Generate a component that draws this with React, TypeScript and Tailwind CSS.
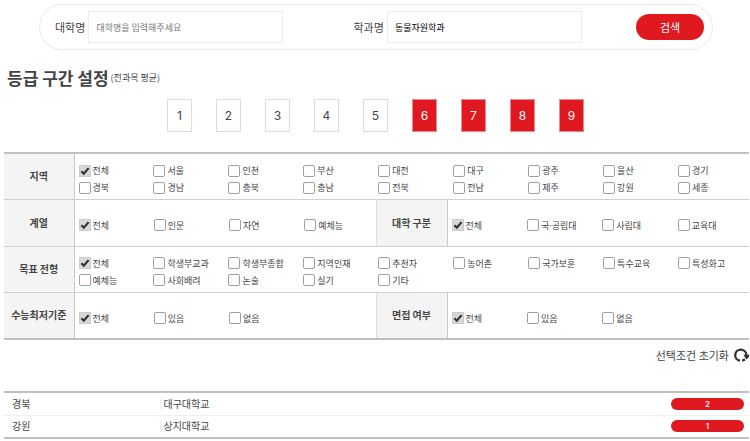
import React, { useState } from "react";

const GRADES = [1, 2, 3, 4, 5, 6, 7, 8, 9];

const REGIONS = ["전체", "서울", "인천", "부산", "대전", "대구", "광주", "울산", "경기", "경북", "경남", "충북", "충남", "전북", "전남", "제주", "강원", "세종"];
const FIELDS = ["전체", "인문", "자연", "예체능"];
const UNIV_TYPES = ["전체", "국·공립대", "사립대", "교육대"];
const ADMISSIONS = ["전체", "학생부교과", "학생부종합", "지역인재", "추천자", "농어촌", "국가보훈", "특수교육", "특성화고", "예체능", "사회배려", "논술", "실기", "기타"];
const YES_NO = ["전체", "있음", "없음"];

const RESULTS = [
  { region: "경북", name: "대구대학교", count: 2 },
  { region: "강원", name: "상지대학교", count: 1 },
];

interface OptionsProps {
  items: string[];
  value: string[];
  onChange: (next: string[]) => void;
  wide?: boolean;
}

function Options({ items, value, onChange, wide }: OptionsProps) {
  const toggle = (item: string) => {
    onChange(value.includes(item) ? value.filter((v) => v !== item) : [...value, item]);
  };

  return (
    <div className={`grid ${wide ? "grid-cols-9 pt-2" : "grid-cols-4 pt-[17px]"}`}>
      {items.map((item) => (
        <label
          key={item}
          className="flex items-center h-[17px] pl-1 gap-0.5 text-[9px] leading-none whitespace-nowrap font-['Inter','Noto_Sans_CJK_KR',sans-serif]"
        >
          <span className="relative block size-3 shrink-0">
            <input
              type="checkbox"
              checked={value.includes(item)}
              onChange={() => toggle(item)}
              className="peer block appearance-none size-3 rounded-xs border border-[#a0a0a0] bg-white checked:rounded-none checked:border-[#cccccc] checked:bg-[#d8d8d8]"
            />
            <svg
              viewBox="0 0 13 13"
              className="absolute inset-0 size-3 hidden peer-checked:block pointer-events-none"
              fill="none"
              stroke="#333"
              strokeWidth="2.4"
            >
              <path d="M2.6 6.8 L5.2 9.4 L10.4 3.4" />
            </svg>
          </span>
          {item}
        </label>
      ))}
    </div>
  );
}

function HeadCell({ children, inner }: { children: React.ReactNode; inner?: boolean }) {
  return (
    <th
      scope="row"
      className={`bg-[#f4f4f4] border-r border-r-[#c8c8c8] text-[10px] leading-4 font-bold text-center align-middle whitespace-nowrap ${inner ? "border-l border-l-[#dddddd]" : ""}`}
    >
      {children}
    </th>
  );
}

export default function App() {
  const [university, setUniversity] = useState("");
  const [department, setDepartment] = useState("동물자원학과");
  const [grades, setGrades] = useState([6, 7, 8, 9]);
  const [regions, setRegions] = useState(["전체"]);
  const [fields, setFields] = useState(["전체"]);
  const [univTypes, setUnivTypes] = useState(["전체"]);
  const [admissions, setAdmissions] = useState(["전체"]);
  const [minimum, setMinimum] = useState(["전체"]);
  const [interview, setInterview] = useState(["전체"]);

  const toggleGrade = (g: number) => {
    setGrades(grades.includes(g) ? grades.filter((v) => v !== g) : [...grades, g]);
  };

  const reset = () => {
    setRegions(["전체"]);
    setFields(["전체"]);
    setUnivTypes(["전체"]);
    setAdmissions(["전체"]);
    setMinimum(["전체"]);
    setInterview(["전체"]);
  };

  return (
    <div className="bg-white text-[#444444] pt-1 pl-1 pr-px font-['Noto_Sans_CJK_KR',sans-serif]">
      {/* Search bar */}
      <form
        onSubmit={(e) => e.preventDefault()}
        className="flex items-center justify-between h-[46px] ml-[35px] mr-9 pl-[15px] pr-2 rounded-full border border-[#e8e8e8]"
      >
        <div className="flex items-center gap-[3px]">
          <label htmlFor="university" className="text-[11px]">대학명</label>
          <input
            id="university"
            value={university}
            onChange={(e) => setUniversity(e.target.value)}
            placeholder="대학명을 입력해주세요"
            className="w-[195px] h-8 px-[7px] border border-[#ececec] text-[9px] text-[#333333] placeholder:text-[#777777] outline-none"
          />
        </div>
        <div className="flex items-center gap-[3px] ml-4">
          <label htmlFor="department" className="text-[11px]">학과명</label>
          <input
            id="department"
            value={department}
            onChange={(e) => setDepartment(e.target.value)}
            className="w-[195px] h-8 px-[7px] border border-[#ececec] text-[9px] text-black outline-none"
          />
        </div>
        <button type="submit" className="w-[68px] h-[26px] rounded-full bg-[#e0181f] text-white text-[11px]">
          검색
        </button>
      </form>

      {/* Grade range */}
      <h2 className="flex items-center gap-0.5 mt-4 pl-[3px] h-6 whitespace-nowrap">
        <span className="text-[17px] font-bold">등급 구간 설정</span>
        <span className="text-[9px] font-normal">(전과목 평균)</span>
      </h2>
      <div className="flex justify-center gap-6 mt-[9px] pr-0.5">
        {GRADES.map((g) => (
          <button
            key={g}
            onClick={() => toggleGrade(g)}
            className={`w-[25px] h-[33px] border text-[12px] font-['Inter',sans-serif] ${
              grades.includes(g) ? "bg-[#e0181f] border-[#e88a8d] text-white" : "bg-white border-[#dddddd]"
            }`}
          >
            {g}
          </button>
        ))}
      </div>

      {/* Filters */}
      <table className="w-full table-fixed border-collapse mt-5 border-y-2 border-y-[#c0c0c0]">
        <colgroup>
          <col className="w-[70px]" />
          <col />
          <col className="w-[71px]" />
          <col />
        </colgroup>
        <tbody className="divide-y divide-[#d0d0d0]">
          <tr className="h-[46px]">
            <HeadCell>지역</HeadCell>
            <td colSpan={3} className="align-top">
              <Options items={REGIONS} value={regions} onChange={setRegions} wide />
            </td>
          </tr>
          <tr className="h-[47px]">
            <HeadCell>계열</HeadCell>
            <td className="align-top">
              <Options items={FIELDS} value={fields} onChange={setFields} />
            </td>
            <HeadCell inner>대학 구분</HeadCell>
            <td className="align-top">
              <Options items={UNIV_TYPES} value={univTypes} onChange={setUnivTypes} />
            </td>
          </tr>
          <tr className="h-[46px]">
            <HeadCell>목표 전형</HeadCell>
            <td colSpan={3} className="align-top">
              <Options items={ADMISSIONS} value={admissions} onChange={setAdmissions} wide />
            </td>
          </tr>
          <tr className="h-[47px]">
            <HeadCell>수능최저기준</HeadCell>
            <td className="align-top">
              <Options items={YES_NO} value={minimum} onChange={setMinimum} />
            </td>
            <HeadCell inner>면접 여부</HeadCell>
            <td className="align-top">
              <Options items={YES_NO} value={interview} onChange={setInterview} />
            </td>
          </tr>
        </tbody>
      </table>

      <div className="flex justify-end mt-[7px]">
        <button onClick={reset} className="flex items-center gap-1 h-4 text-[11px] whitespace-nowrap">
          선택조건 초기화
          <svg viewBox="0 0 16 16" className="w-4 h-4" fill="none" stroke="#333" strokeWidth="2.3">
            <path d="M7 13.7 A5.6 5.6 0 1 1 13.4 8.4" />
            <path d="M9.2 13.8 L12 12.4" />
            <path d="M10.4 7.8 H16 V10 L13.4 12.6 Z" fill="#333" stroke="none" />
          </svg>
        </button>
      </div>

      {/* Results */}
      <table className="w-full table-fixed border-collapse mt-7 border-y-2 border-y-[#c0c0c0] text-[10px] leading-4">
        <colgroup>
          <col className="w-[21%]" />
          <col />
          <col className="w-[78px]" />
        </colgroup>
        <tbody className="divide-y divide-[#f0f0f0]">
          {RESULTS.map((r) => (
            <tr key={r.name} className="h-[23px]">
              <td className="pl-2">{r.region}</td>
              <td>
                <div className="h-3 leading-3 pl-0.5 border-l border-[#eeeeee]">{r.name}</div>
              </td>
              <td className="pr-[5px]">
                <div className="h-3 rounded-full bg-[#e0181f] text-white text-center text-[8px] leading-3 font-medium font-['Inter',sans-serif]">
                  {r.count}
                </div>
              </td>
            </tr>
          ))}
        </tbody>
      </table>
    </div>
  );
}
